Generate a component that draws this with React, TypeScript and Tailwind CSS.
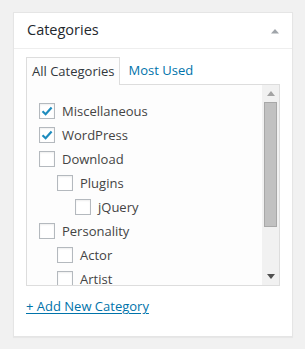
const items = [
  { label: 'Miscellaneous', level: 0, checked: true },
  { label: 'WordPress', level: 0, checked: true },
  { label: 'Download', level: 0, checked: false },
  { label: 'Plugins', level: 1, checked: false },
  { label: 'jQuery', level: 2, checked: false },
  { label: 'Personality', level: 0, checked: false },
  { label: 'Actor', level: 1, checked: false },
  { label: 'Artist', level: 1, checked: false },
];

const indent = ['pl-0', 'pl-[18px]', 'pl-[36px]'];

const CheckBox = ({ checked }: { checked: boolean }) => (
  <span className="w-4 h-4 shrink-0 border border-[#b4b9be] bg-white shadow-[inset_0_1px_2px_rgba(0,0,0,0.07)] flex items-center justify-center">
    {checked && (
      <svg width="12" height="12" viewBox="0 0 12 12">
        <path d="M1.5 6.2 L4.6 9.2 L10.6 2.4" fill="none" stroke="#1e8cbe" strokeWidth="2.2" />
      </svg>
    )}
  </span>
);

export default function App() {
  return (
    <div className="w-[305px] h-[349px] bg-[#f1f1f1] pt-3 pl-[13px] font-['Open_Sans',sans-serif] text-[13px] text-[#444]">
      <div className="w-[280px] h-[325px] bg-white border border-[#e5e5e5] shadow-[0_1px_1px_rgba(0,0,0,0.04)] flex flex-col">
        <div className="h-[36px] shrink-0 border-b border-[#eee] flex items-center justify-between pl-[13px] pr-[12px]">
          <h2 className="text-[14.5px] text-[#23282d] leading-none">Categories</h2>
          <svg width="10" height="6" viewBox="0 0 10 6">
            <path d="M1 5.5 L5 1 L9 5.5 Z" fill="#a0a5aa" />
          </svg>
        </div>
        <div className="px-3 pt-[8px]">
          <div className="flex items-end h-[27px]">
            <div className="h-[28px] -mb-px relative z-10 border border-[#ddd] border-b-0 bg-[#fdfdfd] px-[5px] flex items-center text-[#32373c]">
              All Categories
            </div>
            <div className="h-[27px] px-[8px] flex items-center text-[#0073aa]">Most Used</div>
          </div>
          <div className="h-[202px] border border-[#ddd] bg-[#fdfdfd] flex overflow-hidden">
            <ul className="flex-1 pl-3 pt-[14px] overflow-hidden">
              {items.map((it) => (
                <li key={it.label} className={`h-6 flex items-center ${indent[it.level]}`}>
                  <CheckBox checked={it.checked} />
                  <span className="ml-[7px] leading-none">{it.label}</span>
                </li>
              ))}
            </ul>
            <div className="w-[17px] shrink-0 bg-[#f1f1f1] flex flex-col items-center">
              <div className="h-[17px] flex items-center justify-center">
                <svg width="8" height="5" viewBox="0 0 8 5">
                  <path d="M0 5 L4 0 L8 5 Z" fill="#a3a3a3" />
                </svg>
              </div>
              <div className="w-[13px] h-[125px] bg-[#c1c1c1] border border-[#a8a8a8]" />
              <div className="flex-1" />
              <div className="h-[17px] flex items-center justify-center">
                <svg width="8" height="5" viewBox="0 0 8 5">
                  <path d="M0 0 L8 0 L4 5 Z" fill="#505050" />
                </svg>
              </div>
            </div>
          </div>
          <div className="mt-[11px]">
            <a href="#" className="text-[#0073aa] underline underline-offset-2">+ Add New Category</a>
          </div>
        </div>
      </div>
    </div>
  );
}
